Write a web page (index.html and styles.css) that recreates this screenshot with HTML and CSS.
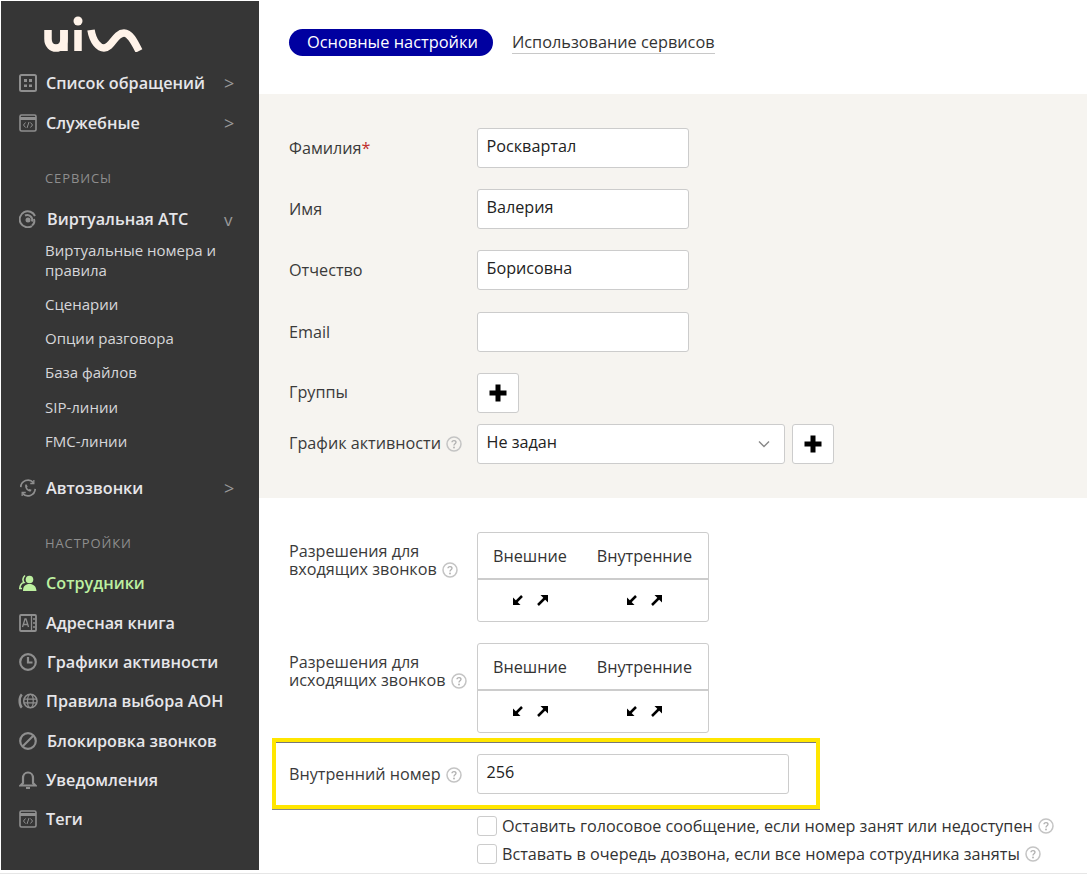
FILE: index.html
```html
<!DOCTYPE html>
<html lang="ru">
<head>
<meta charset="utf-8">
<title>Сотрудник</title>
<link rel="stylesheet" href="styles.css">
</head>
<body>
<svg width="0" height="0" class="defs">
  <defs>
    <symbol id="code" viewBox="0 0 18 18"><rect x="1" y="1" width="16" height="16" rx="1.500" fill="none" stroke="currentColor" stroke-width="1.600"/><path d="M1 4.500h16" stroke="currentColor" stroke-width="3"/><path d="M6.500 8.500 4.500 11l2 2.500M11.500 8.500l2 2.500-2 2.500M10 8l-2 6" fill="none" stroke="currentColor"/></symbol>
    <symbol id="help" viewBox="0 0 16 16"><circle cx="8" cy="8" r="7" fill="none" stroke="#c4c4c4" stroke-width="1.500"/><path d="M6 6.300C6 4 10 4 10 6.300 10 7.800 8 7.800 8 9.500" fill="none" stroke="#b0b0b0" stroke-width="1.300"/><circle cx="8" cy="11.500" r=".9" fill="#b0b0b0"/></symbol>
    <symbol id="plus" viewBox="0 0 18 18"><path d="M9 .5v17M.5 9h17" stroke="#000" stroke-width="5"/></symbol>
    <symbol id="arrows" viewBox="0 0 38 12"><path d="M2 11V3.500L9.500 11z" fill="#000"/><path d="M4.500 8.500 11 2" stroke="#000" stroke-width="2.500"/><path d="M37 1v7.500L29.500 1z" fill="#000"/><path d="M34 4l-7 7" stroke="#000" stroke-width="2.500"/></symbol>
  </defs>
</svg>
<div class="page">
  <aside class="sidebar">
    <div class="logo">
      <svg width="100" height="36" viewBox="0 0 100 36"><g fill="none" stroke="#fff3e9" stroke-width="7.500"><path d="M4 14v9c0 12 16 12 16 0V14"/><path d="M20 14v21"/><path d="M34 14v21"/><path d="M47 14c2 12 8 18 13 18 8 0 11-15 20-15 6 0 10 8 15 18"/></g><circle cx="34" cy="5" r="4.500" fill="#fff3e9"/></svg>
    </div>
    <a class="nav n1"><svg class="ico" viewBox="0 0 18 18"><rect x="1" y="1" width="16" height="16" rx="1.500" fill="none" stroke="currentColor" stroke-width="2"/><path d="M5 5h3v3H5zM10 5h3v3h-3zM5 10.500h3v2.500H5zM10 10.500h3v2.500h-3z" fill="currentColor"/></svg><span>Список обращений</span><i class="chev">&gt;</i></a>
    <a class="nav n2"><svg class="ico"><use href="#code"/></svg><span>Служебные</span><i class="chev">&gt;</i></a>
    <div class="section s1">СЕРВИСЫ</div>
    <a class="nav n3"><svg class="ico" viewBox="0 0 18 18"><path d="M16 6A8 8 0 1 0 13 16" fill="none" stroke="currentColor" stroke-width="2"/><path d="M6 5.500a5 5 0 0 1 7 6" fill="none" stroke="currentColor" stroke-width="2"/><path d="M15 9a6 6 0 0 1-2 6.500" fill="none" stroke="currentColor" stroke-width="2"/><circle cx="9" cy="10" r="2.500" fill="currentColor"/></svg><span class="sp1">Виртуальная АТС</span><i class="chev v">v</i></a>
    <div class="subnav">
      <a class="sub">Виртуальные номера и правила</a>
      <a class="sub">Сценарии</a>
      <a class="sub">Опции разговора</a>
      <a class="sub">База файлов</a>
      <a class="sub sip">SIP-линии</a>
      <a class="sub">FMC-линии</a>
    </div>
    <a class="nav n4"><svg class="ico wide" viewBox="0 0 20 20"><path d="M2 9a8 8 0 0 1 14-5M18 11a8 8 0 0 1-14 5" fill="none" stroke="currentColor" stroke-width="1.800"/><path d="M16.500 1v4h-4M3.500 19v-4h4" fill="none" stroke="currentColor" stroke-width="1.400"/><path d="M7 6c-1 4 2 8 6 8l1-2-2.500-1-1 .7-1.700-2 .8-1L8.500 6z" fill="currentColor"/></svg><span>Автозвонки</span><i class="chev">&gt;</i></a>
    <div class="section s2">НАСТРОЙКИ</div>
    <a class="nav n5 active"><svg class="ico" viewBox="0 0 18 18"><circle cx="10.500" cy="5.500" r="3.800" fill="currentColor"/><path d="M4 17c0-5 2.500-7 6.500-7s6.500 2 7 7z" fill="currentColor"/><path d="M6 1.500C3.500 3.500 3.500 7 5 8.500 2.500 9 1 11 .8 14.500H3" fill="none" stroke="currentColor" stroke-width="1.600"/></svg><span>Сотрудники</span></a>
    <a class="nav"><svg class="ico" viewBox="0 0 18 18"><rect x="1" y="1" width="16" height="16" rx="1" fill="none" stroke="currentColor" stroke-width="1.800"/><path d="M12.500 1v16" stroke="currentColor" stroke-width="1.300"/><path d="M3.500 13 6 5h1l2.500 8M4.500 10.500h4" fill="none" stroke="currentColor" stroke-width="1.300"/><path d="M14 5h2M14 9h2M14 13h2" stroke="currentColor" stroke-width="1.500"/></svg><span>Адресная книга</span></a>
    <a class="nav"><svg class="ico" viewBox="0 0 18 18"><circle cx="9" cy="9" r="7.800" fill="none" stroke="currentColor" stroke-width="2.200"/><path d="M9 4v5.500h4.500" fill="none" stroke="currentColor" stroke-width="2.200"/></svg><span class="sp1">Графики активности</span></a>
    <a class="nav"><svg class="ico wide" viewBox="0 0 21 18"><path d="M4 2C1 5 1 13 4 16" fill="none" stroke="currentColor" stroke-width="2.600"/><circle cx="13" cy="9" r="7" fill="none" stroke="currentColor" stroke-width="1.600"/><ellipse cx="13" cy="9" rx="3" ry="7" fill="none" stroke="currentColor" stroke-width="1.300"/><path d="M6 7h14M6 11h14" stroke="currentColor" stroke-width="1.300"/></svg><span>Правила выбора АОН</span></a>
    <a class="nav"><svg class="ico" viewBox="0 0 18 18"><circle cx="9" cy="9" r="7.800" fill="none" stroke="currentColor" stroke-width="2.200"/><path d="M4 14 14 4" stroke="currentColor" stroke-width="2.200"/></svg><span class="sp1">Блокировка звонков</span></a>
    <a class="nav"><svg class="ico" viewBox="0 0 18 18"><path d="M9 1.500c-3 0-5 2.500-5 5.500v5l-2.500 2.500h15L14 12V7c0-3-2-5.500-5-5.500z" fill="none" stroke="currentColor" stroke-width="2.200"/><path d="M7 17h4" stroke="currentColor" stroke-width="2"/></svg><span>Уведомления</span></a>
    <a class="nav"><svg class="ico"><use href="#code"/></svg><span>Теги</span></a>
  </aside>
  <main class="main">
    <nav class="tabs">
      <a class="tab-on">Основные настройки</a>
      <a class="tab-off">Использование сервисов</a>
    </nav>
    <section class="panel">
      <div class="row"><label class="lab">Фамилия<b class="req">*</b></label><div class="input short">Росквартал</div></div>
      <div class="row"><label class="lab">Имя</label><div class="input short">Валерия</div></div>
      <div class="row"><label class="lab">Отчество</label><div class="input short">Борисовна</div></div>
      <div class="row r-email"><label class="lab">Email</label><div class="input short"></div></div>
      <div class="row r-groups"><label class="lab up">Группы</label><button class="add"><svg class="plus"><use href="#plus"/></svg></button></div>
      <div class="row r-sched"><label class="lab up">График активности <svg class="help"><use href="#help"/></svg></label>
        <div class="input select">Не задан<svg class="caret" viewBox="0 0 12 8"><path d="M1 1.500l5 5 5-5" fill="none" stroke="#888" stroke-width="1.400"/></svg></div>
        <button class="add"><svg class="plus"><use href="#plus"/></svg></button></div>
    </section>
    <section class="perms">
      <div class="perm"><label class="lab two">Разрешения для<br>входящих звонков <svg class="help"><use href="#help"/></svg></label>
        <div class="ptable"><div class="phead"><span>Внешние</span><span>Внутренние</span></div><div class="pbody"><svg class="arrows"><use href="#arrows"/></svg><svg class="arrows"><use href="#arrows"/></svg></div></div></div>
      <div class="perm"><label class="lab two">Разрешения для<br>исходящих звонков <svg class="help"><use href="#help"/></svg></label>
        <div class="ptable"><div class="phead"><span>Внешние</span><span>Внутренние</span></div><div class="pbody"><svg class="arrows"><use href="#arrows"/></svg><svg class="arrows"><use href="#arrows"/></svg></div></div></div>
      <div class="highlight"><label class="lab">Внутренний номер <svg class="help"><use href="#help"/></svg></label><div class="input number">256</div></div>
      <div class="check"><span class="box"></span>Оставить голосовое сообщение, если номер занят или недоступен <svg class="help"><use href="#help"/></svg></div>
      <div class="check"><span class="box"></span>Вставать в очередь дозвона, если все номера сотрудника заняты <svg class="help"><use href="#help"/></svg></div>
    </section>
  </main>
</div>
</body>
</html>
```
FILE: styles.css
```css
* { box-sizing: border-box; }
html, body { margin: 0; padding: 0; height: 875px; overflow: hidden; background: #fff; }
body { font-family: "Open Sans", sans-serif; font-size: 16.200px; color: #333; }
.defs { position: absolute; }
.page { display: flex; height: 874px; border-bottom: 1px solid #e6e6e6; }
.sidebar { width: 259px; flex: none; height: 869px; margin-top: 1px; border-left: 1px solid #fff; background: #363636; color: #e8e8ec; }
.logo { height: 55px; padding: 15px 0 0 43px; }
.logo svg { display: block; }
.nav { display: flex; align-items: center; height: 39.300px; padding-left: 18px; font-weight: 600; font-size: 16.200px; color: #e6e6ea; position: relative; }
.nav span { margin-left: 9px; white-space: nowrap; }
.nav span.sp1 { margin-left: 10px; }
.n1 { margin-top: 7px; }
.n2 { margin-top: 1px; }
.ico { width: 18px; height: 18px; flex: none; color: #8f8f8f; }
.ico.wide { width: 20px; margin-left: -1px; }
.ico.wide + span { margin-left: 8px; }
.chev { position: absolute; left: 223px; font-style: normal; font-weight: 400; font-size: 18px; color: #9a9a9a; }
.chev.v { font-size: 17px; }
.section { font-size: 13px; letter-spacing: .9px; color: #8e8e8e; padding-left: 44px; height: 20px; line-height: 20px; }
.s1 { margin-top: 25px; }
.s2 { margin-top: 26px; }
.n3 { margin-top: 12px; }
.subnav { display: flex; flex-direction: column; margin-top: -6px; padding-left: 44px; padding-right: 30px; font-size: 15px; line-height: 20px; color: #d6d6da; }
.sub { padding: 7px 0; }
.sip { margin-top: 1px; }
.n4 { margin-top: 10px; }
.n5 { margin-top: 10.500px; }
.active, .active .ico { color: #bdf0a0; }
.main { flex: 1; min-width: 0; }
.tabs { height: 94px; padding: 29px 0 0 30px; display: flex; align-items: flex-start; gap: 19px; }
.tab-on { height: 27px; line-height: 26px; padding: 0 15px 0 18px; border-radius: 14px; background: #0000a0; color: #fff; font-size: 16.400px; }
.tab-off { height: 25px; line-height: 27px; border-bottom: 1px solid #c8c8c8; color: #333; font-size: 16.300px; }
.panel { height: 404px; background: #f6f4f0; padding: 34px 0 0 30px; }
.row { display: flex; align-items: center; height: 40px; margin-bottom: 21px; }
.r-email { margin-top: 22px; }
.lab { width: 188px; flex: none; color: #3a3a3a; line-height: 18px; }
.lab.up { margin-top: -2px; }
.req { color: #c03030; font-weight: 400; }
.input { height: 40px; background: #fff; border: 1px solid #ccc; border-radius: 3px; padding: 0 8.500px; line-height: 34px; color: #222; }
.short { width: 212px; }
.r-groups { margin-bottom: 11px; }
.add { width: 42px; height: 40px; padding: 0; background: #fff; border: 1px solid #ccc; border-radius: 3px; display: flex; align-items: center; justify-content: center; }
.plus { width: 18px; height: 18px; display: block; }
.select { width: 308px; position: relative; margin-right: 7px; }
.caret { position: absolute; right: 14px; top: 15px; width: 12px; height: 8px; }
.help { width: 16px; height: 16px; vertical-align: -3px; margin-left: 1px; }
.perms { padding: 34px 0 0 0; }
.perm { display: flex; padding-left: 30px; margin-bottom: 21px; }
.perm:nth-child(2) { margin-bottom: 5px; }
.lab.two { margin-top: 10px; }
.ptable { width: 232px; height: 90px; border: 1px solid #ccc; border-radius: 3px; display: flex; flex-direction: column; }
.phead { height: 47px; display: flex; border-bottom: 2px solid #ccc; align-items: center; padding: 0 16px 0 15px; justify-content: space-between; color: #333; }
.pbody { flex: 1; display: flex; align-items: center; padding: 0 0 1px 33px; gap: 76px; }
.arrows { width: 38px; height: 12px; }
.highlight { margin-left: 13px; width: 548px; height: 71px; border: 4px solid #ffe600; box-shadow: inset 0 1px 0 #777, 0 1px 0 #888; display: flex; align-items: center; padding: 1px 0 0 13px; margin-bottom: 3px; }
.number { width: 312px; }
.check { display: flex; align-items: center; height: 28px; padding-left: 218px; color: #333; white-space: nowrap; }
.check .help { margin-left: 5px; }
.box { width: 20px; height: 20px; margin-right: 5px; background: #fff; border: 1px solid #ccc; border-radius: 3px; flex: none; }
```
